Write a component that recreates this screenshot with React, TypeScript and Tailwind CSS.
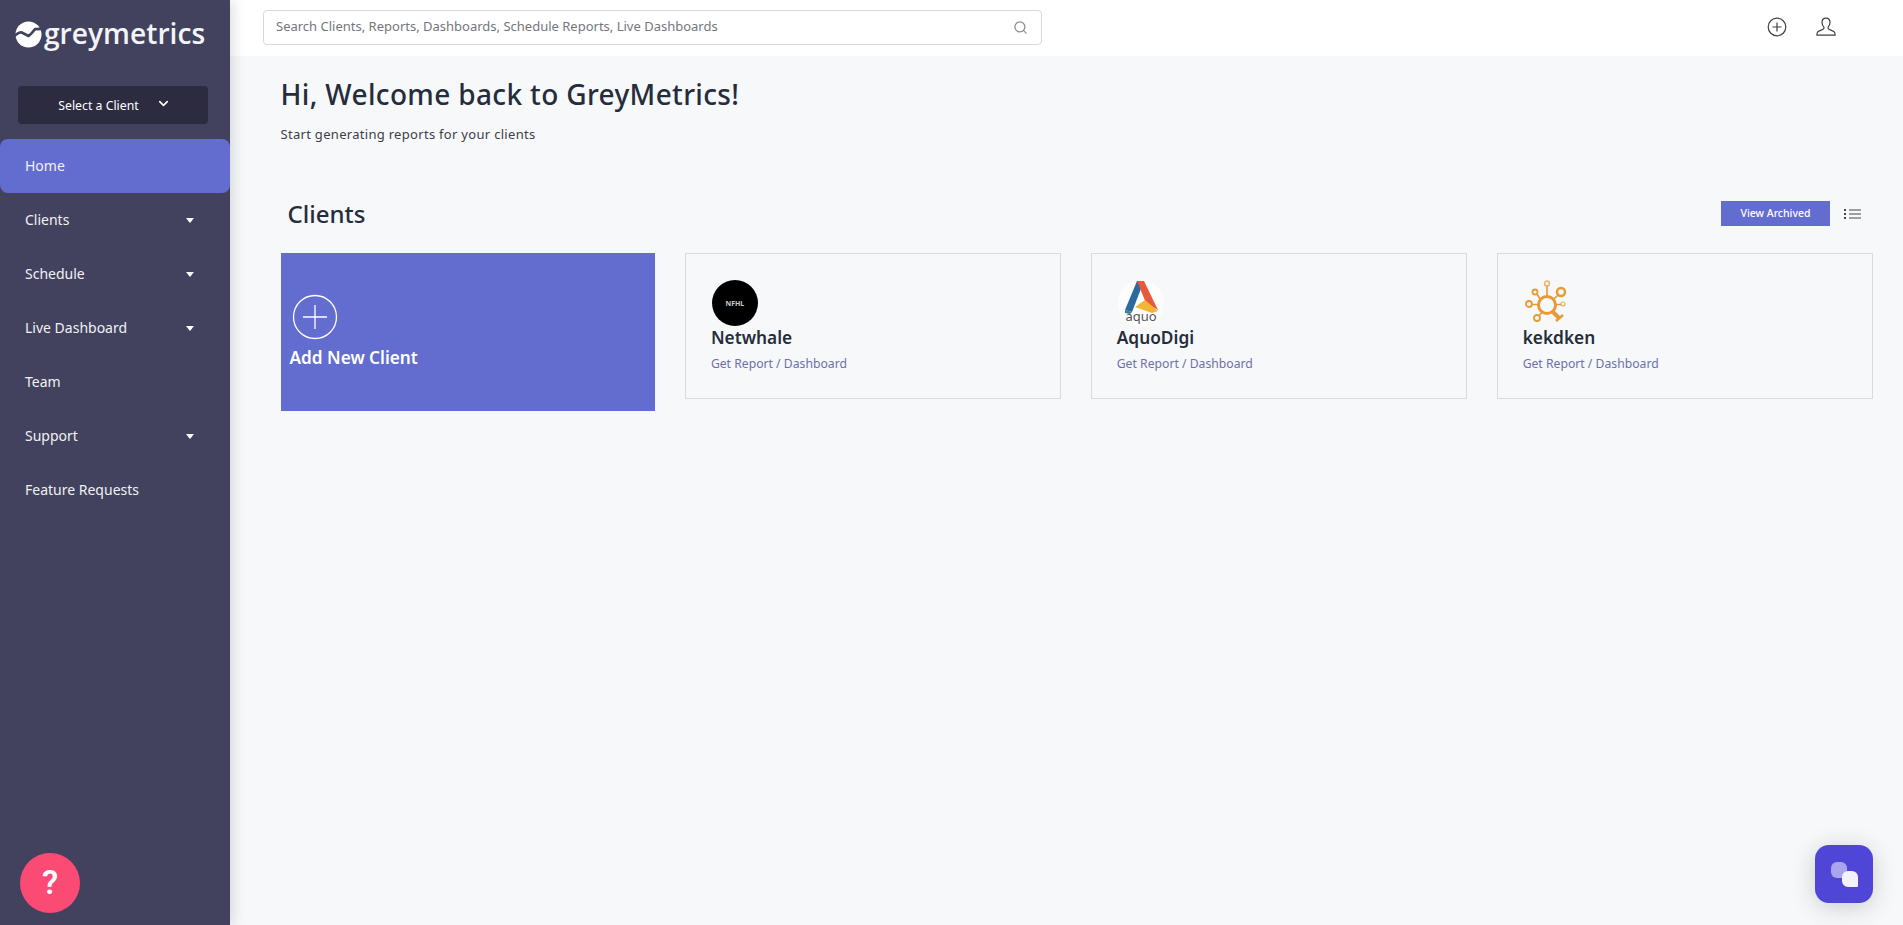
import { ChevronDown, Search } from "lucide-react";

const font = { fontFamily: '"Noto Sans", sans-serif' };

const navItems = [
  { label: "Home", active: true },
  { label: "Clients", caret: true },
  { label: "Schedule", caret: true },
  { label: "Live Dashboard", caret: true },
  { label: "Team" },
  { label: "Support", caret: true },
  { label: "Feature Requests" },
];

const Logo = () => (
  <svg viewBox="0 0 28 28" className="h-[27px] w-[27px] shrink-0">
    <circle cx="14" cy="14" r="13.5" fill="#fff" />
    <path d="M-1 16 C2 13 5 11 7 12 L14 15.5 C17 14 19 10 21 8.5 L29 8" fill="none" stroke="#42425f" strokeWidth="2.8" />
  </svg>
);

const Sidebar = () => (
  <aside className="relative z-10 flex w-[230px] shrink-0 flex-col bg-[#42425f] shadow-[4px_0_12px_rgba(0,0,0,0.12)]">
    <div className="flex h-[68px] items-center pl-[15px] pt-[1px]">
      <Logo />
      <span className="ml-[2px] pb-[2px] text-[28.2px] font-semibold leading-none text-[#f4f4f6]" style={{ fontFamily: '"Open Sans", sans-serif' }}>greymetrics</span>
    </div>
    <div className="ml-[18px] mr-[22px] mt-[18px] flex h-[38px] items-center justify-center gap-[17px] rounded bg-[#2c2b40] pl-[3px] text-[12.3px] text-white">
      <span className="pt-[3px]">Select a Client</span>
      <ChevronDown size={15} strokeWidth={2.5} className="-mt-1" />
    </div>
    <nav className="mt-[15px] flex flex-col">
      {navItems.map((item) => (
        <div
          key={item.label}
          className={`flex h-[54px] items-center justify-between pl-[25px] pr-[36px] text-[14px] text-[#f1f1f4] ${item.active ? "rounded-lg bg-[#636dcf]" : ""}`}
        >
          <span className="pb-[2px]">{item.label}</span>
          {item.caret && <span className="h-0 w-0 border-x-[4.5px] border-t-[5px] border-x-transparent border-t-white" />}
        </div>
      ))}
    </nav>
    <div className="mt-auto mb-[12px] ml-[20px] flex h-[60px] w-[60px] items-center justify-center rounded-full bg-[#fb4a74] text-[33px] font-semibold text-white" style={{ fontFamily: "Roboto, sans-serif" }}>?</div>
  </aside>
);

const Topbar = () => (
  <header className="flex h-[56px] items-center bg-white pb-[2px] pl-[33px]">
    <div className="flex h-[35px] w-[779px] items-center justify-between rounded border border-[#d8d8de] pl-3 pr-[13px]">
      <span className="text-[13px] text-[#74767c]">Search Clients, Reports, Dashboards, Schedule Reports, Live Dashboards</span>
      <Search size={15} className="text-[#8a8a8f]" />
    </div>
    <div className="ml-auto mr-[67px] flex items-center gap-[29px] text-[#3f4045]">
      <svg viewBox="0 0 20 20" className="h-[20px] w-[20px]" fill="none" stroke="currentColor" strokeWidth="1.2">
        <circle cx="10" cy="10" r="8.8" />
        <path d="M10 5.5v9M5.5 10h9" />
      </svg>
      <svg viewBox="0 0 20 20" className="h-[20px] w-[20px]" fill="none" stroke="currentColor" strokeWidth="1.2">
        <path d="M10 1.2c-2.7 0-4 2-4 4.3 0 1.9.8 3.5 1.9 4.6v1.5c0 .9-5.4 2.2-6.4 3.6-.5.8-.6 2.3-.6 3h18.2c0-.7-.1-2.2-.6-3-1-1.4-6.4-2.7-6.4-3.6v-1.5c1.1-1.1 1.9-2.7 1.9-4.6 0-2.3-1.3-4.3-4-4.3z" />
      </svg>
    </div>
  </header>
);

const NetwhaleLogo = () => (
  <div className="flex h-[46px] w-[46px] items-center justify-center rounded-full bg-black text-[7px] font-bold leading-none text-[#ccc]">NFHL</div>
);

const AquoLogo = () => (
  <svg viewBox="0 0 46 46" className="h-[46px] w-[46px]">
    <circle cx="23" cy="23" r="23" fill="#fdfdfe" />
    <path d="M7 30 L19 1 H26 L14 32 Z" fill="#2b6a9f" />
    <path d="M7 30 L14 32 L12 34 L7 33 Z" fill="#2d8a88" />
    <path d="M19 1 H26 L40 30 L28 23 Z" fill="#e8593a" />
    <path d="M17 27 L27 20 L40 31 L34 33 Z" fill="#f2b632" />
    <text x="23" y="41" textAnchor="middle" fontSize="13" fill="#555" style={font}>aquo</text>
  </svg>
);

const KekLogo = () => (
  <svg viewBox="0 0 46 46" className="h-[46px] w-[46px]" fill="none" stroke="#e89a35">
    <circle cx="23" cy="25" r="8.5" strokeWidth="3" />
    <circle cx="37" cy="12" r="4" strokeWidth="2.5" />
    <circle cx="23" cy="3.5" r="2.5" strokeWidth="1.4" opacity="0.75" />
    <circle cx="11" cy="12" r="2.5" strokeWidth="1.8" />
    <circle cx="5" cy="24" r="3" strokeWidth="1.8" />
    <circle cx="13" cy="38" r="3" strokeWidth="1.8" />
    <circle cx="39" cy="24" r="2" strokeWidth="1.2" opacity="0.75" />
    <path d="M30 19l4-4M23 16V6M16 19l-3-5M14 24.5H8M18 32l-3 4M32 24.5h5" strokeWidth="1.6" />
    <path d="M29 32l6 6" strokeWidth="4" />
    <path d="M32 41l7-6" strokeWidth="2.5" />
  </svg>
);

const clients = [
  { name: "Netwhale", logo: <NetwhaleLogo /> },
  { name: "AquoDigi", logo: <AquoLogo /> },
  { name: "kekdken", logo: <KekLogo /> },
];

const ClientCard = ({ name, logo }: { name: string; logo: React.ReactNode }) => (
  <div className="flex h-[146px] w-[376px] flex-col border border-[#d9dade] pl-[24.5px] pt-[26px]">
    <div className="pl-px">{logo}</div>
    <div className="text-[17.3px] font-semibold leading-[24px] text-[#252d3c]">{name}</div>
    <div className="mt-[5px] text-[12.2px] leading-[18px] text-[#6b71a8]">Get Report / Dashboard</div>
  </div>
);

export default function App() {
  return (
    <div className="flex min-h-screen bg-[#f7f8fa]" style={font}>
      <Sidebar />
      <main className="flex min-w-0 flex-1 flex-col">
        <Topbar />
        <div className="pl-[50.5px] pr-[30px]">
          <h1 className="mt-[19px] text-[28px] font-medium leading-[38px] tracking-[0.35px] text-[#252d3c]">Hi, Welcome back to GreyMetrics!</h1>
          <p className="mt-[12px] text-[13px] leading-[18px] tracking-[0.3px] text-[#3c3f47]">Start generating reports for your clients</p>
          <div className="mt-[52px] flex h-[37px] items-center justify-between pl-[7px]">
            <h2 className="text-[24px] font-medium leading-[32px] text-[#252d3c]">Clients</h2>
            <div className="flex items-center gap-[13px] pr-[12px]">
              <div className="flex h-[25px] w-[109px] items-center justify-center bg-[#636dcf] text-[10.5px] font-medium text-white">View Archived</div>
              <svg viewBox="0 0 18 12" className="h-[12px] w-[18px]" stroke="#45464c">
                <path d="M1 2h2M1 6h2M1 10h2" strokeWidth="2.2" />
                <path d="M6 2h12M6 6h12M6 10h12" strokeWidth="1" />
              </svg>
            </div>
          </div>
          <div className="mt-[21px] flex items-start gap-[30px]">
            <div className="flex h-[158px] w-[375px] flex-col bg-[#636dcf] pl-[9px] pt-[41px] text-white">
              <svg viewBox="0 0 46 46" className="ml-[2px] h-[46px] w-[46px]" fill="none" stroke="#fff" strokeWidth="1.3">
                <circle cx="23" cy="23" r="21.5" />
                <path d="M23 11v24M11 23h24" />
              </svg>
              <div className="mt-[6px] text-[17.2px] font-semibold leading-[24px]">Add New Client</div>
            </div>
            {clients.map((c) => (
              <ClientCard key={c.name} name={c.name} logo={c.logo} />
            ))}
          </div>
        </div>
      </main>
      <div className="fixed bottom-[22px] right-[30px] flex h-[58px] w-[58px] items-center justify-center rounded-[14px] bg-[#4f46d8] shadow-[0_4px_24px_rgba(0,0,0,0.18)]">
        <div className="relative h-[25px] w-[27px]">
          <div className="absolute left-0 top-0 h-[16px] w-[16px] rounded-[6px] bg-[#a9a5ec]" />
          <div className="absolute bottom-0 right-0 h-[16px] w-[16px] rounded-[6px] rounded-br-[1px] bg-[#f2f1fc]" />
        </div>
      </div>
    </div>
  );
}
